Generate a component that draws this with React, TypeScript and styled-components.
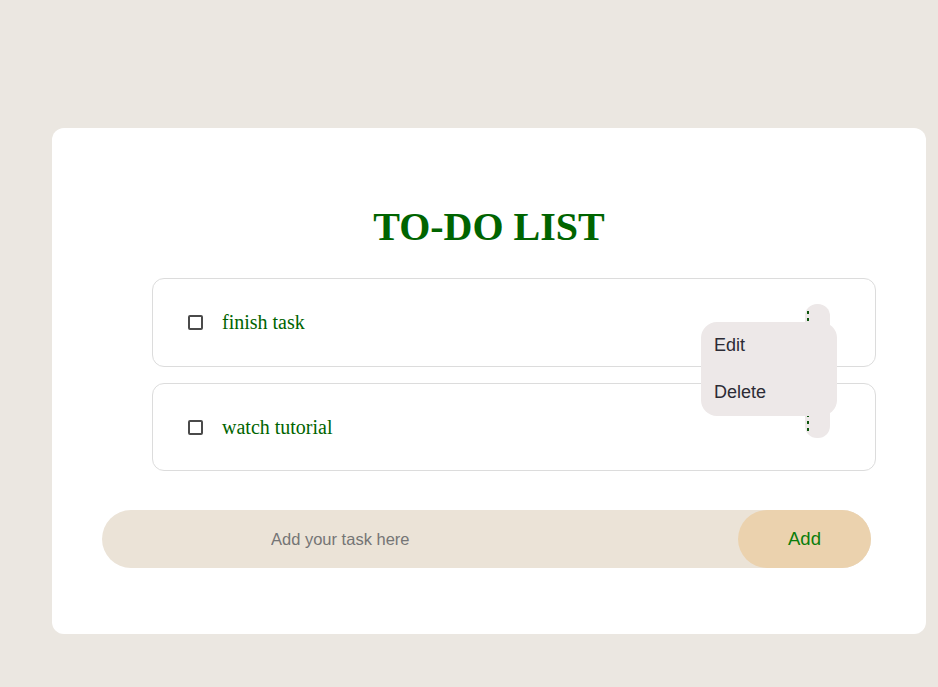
import React, { useState } from 'react';
import styled, { createGlobalStyle } from 'styled-components';

const GlobalStyle = createGlobalStyle`
  html, body {
    margin: 0;
    padding: 0;
    background: #ebe7e1;
    font-family: "Liberation Serif", "Times New Roman", serif;
  }
  #root {
    min-height: 687px;
  }
`;

const Page = styled.div`
  padding: 128px 12px 53px 52px;
`;

const Card = styled.div`
  background: #ffffff;
  border-radius: 12px;
  padding: 0 50px 66px 50px;
  height: 506px;
  box-sizing: border-box;
  display: flex;
  flex-direction: column;
`;

const Title = styled.h1`
  margin: 76px 0 28px 0;
  text-align: center;
  font-family: "Liberation Serif", "Times New Roman", serif;
  font-size: 40px;
  line-height: 46px;
  font-weight: bold;
  color: #006400;
`;

const List = styled.ul`
  list-style: none;
  margin: 0;
  padding: 0 0 0 50px;
  display: flex;
  flex-direction: column;
  gap: 16px;
`;

const Item = styled.li<{ $h: number }>`
  height: ${(p) => p.$h}px;
  box-sizing: border-box;
  border: 1px solid #dcdcdc;
  border-radius: 12px;
  display: flex;
  align-items: center;
  padding: 0 45px 0 35px;
`;

const Check = styled.input`
  appearance: none;
  margin: 0 19px 0 0;
  width: 15px;
  height: 15px;
  box-sizing: border-box;
  border: 2px solid #4a4a4a;
  border-radius: 2px;
  background: #fff;
  flex: none;
`;

const TaskText = styled.span`
  flex: 1;
  font-size: 20px;
  color: #006400;
`;

const KebabWrap = styled.div<{ $lift: number }>`
  position: relative;
  flex: none;
  margin-bottom: ${(p) => p.$lift}px;
`;

const Kebab = styled.button<{ $dotTop: number }>`
  width: 25px;
  height: 37px;
  border: none;
  border-radius: 12px;
  background: #ede8e8;
  padding: ${(p) => p.$dotTop}px 0 0 2px;
  box-sizing: border-box;
  display: flex;
  flex-direction: column;
  align-items: flex-start;
  gap: 4px;
  cursor: pointer;
`;

const Dot = styled.span`
  width: 2px;
  height: 3px;
  background: #0e560e;
`;

const Menu = styled.div`
  position: absolute;
  top: 18px;
  right: -7px;
  width: 136px;
  background: #ede8e8;
  border-radius: 16px;
  z-index: 2;
  display: flex;
  flex-direction: column;
`;

const MenuItem = styled.div`
  height: 47px;
  display: flex;
  align-items: center;
  padding-left: 13px;
  font-family: "Liberation Sans", Arial, sans-serif;
  font-size: 18px;
  color: #2c2b35;
`;

const InputRow = styled.div`
  margin-top: 39px;
  width: calc(100% - 5px);
  height: 58px;
  flex: none;
  display: flex;
  background: #ebe3d7;
  border-radius: 29px;
`;

const TaskInput = styled.input`
  flex: 1;
  min-width: 0;
  border: none;
  outline: none;
  background: transparent;
  padding: 0 0 0 169px;
  font-family: "Liberation Sans", Arial, sans-serif;
  font-size: 16.5px;
  color: #333;
  &::placeholder {
    color: #757575;
  }
`;

const AddButton = styled.button`
  width: 133px;
  height: 58px;
  border: none;
  border-radius: 29px;
  background: #ebd2ae;
  font-family: "Liberation Sans", Arial, sans-serif;
  font-size: 18.5px;
  color: #0a7d0a;
  cursor: pointer;
`;

const tasks = [
  { text: 'finish task', h: 89, lift: 0, dotTop: 7 },
  { text: 'watch tutorial', h: 88, lift: 15, dotTop: 13 },
];

export default function App() {
  const [open] = useState(0);
  return (
    <>
      <GlobalStyle />
      <Page>
        <Card>
          <Title>TO-DO LIST</Title>
          <List>
            {tasks.map((t, i) => (
              <Item key={t.text} $h={t.h}>
                <Check type="checkbox" />
                <TaskText>{t.text}</TaskText>
                <KebabWrap $lift={t.lift}>
                  <Kebab aria-label="more" $dotTop={t.dotTop}>
                    <Dot />
                    <Dot />
                    <Dot />
                  </Kebab>
                  {open === i && (
                    <Menu>
                      <MenuItem>Edit</MenuItem>
                      <MenuItem>Delete</MenuItem>
                    </Menu>
                  )}
                </KebabWrap>
              </Item>
            ))}
          </List>
          <InputRow>
            <TaskInput placeholder="Add your task here" />
            <AddButton>Add</AddButton>
          </InputRow>
        </Card>
      </Page>
    </>
  );
}
